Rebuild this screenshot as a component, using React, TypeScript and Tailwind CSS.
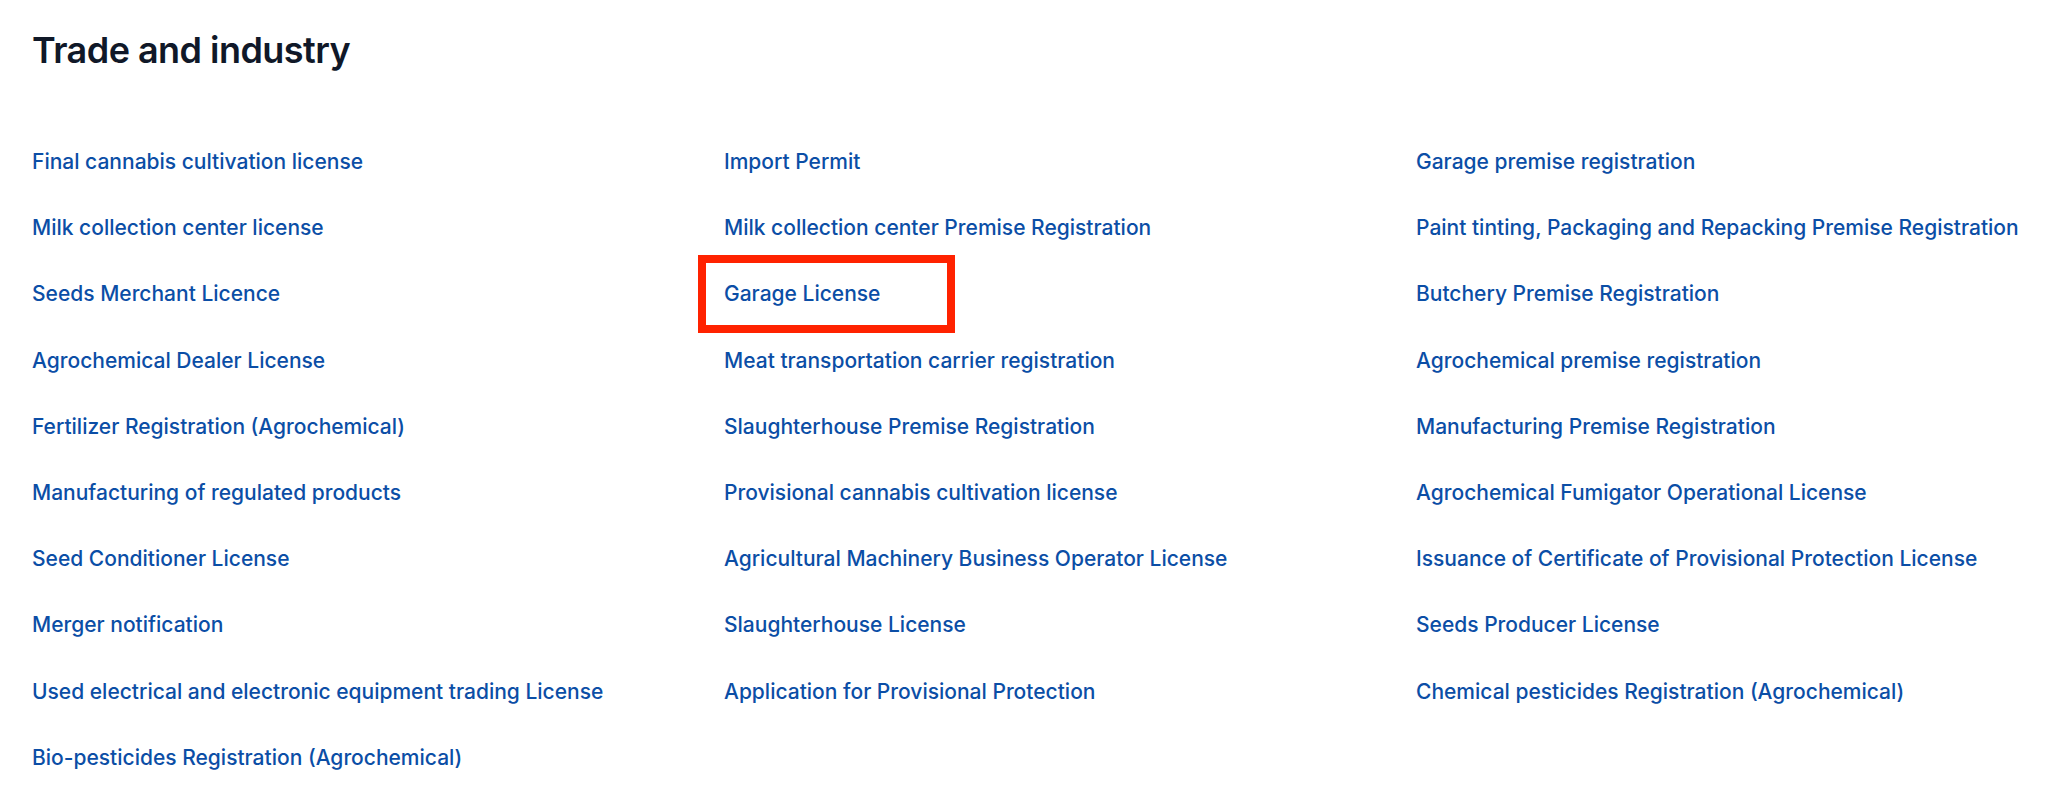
import React from "react";

const items: string[] = [
  "Final cannabis cultivation license",
  "Import Permit",
  "Garage premise registration",
  "Milk collection center license",
  "Milk collection center Premise Registration",
  "Paint tinting, Packaging and Repacking Premise Registration",
  "Seeds Merchant Licence",
  "Garage License",
  "Butchery Premise Registration",
  "Agrochemical Dealer License",
  "Meat transportation carrier registration",
  "Agrochemical premise registration",
  "Fertilizer Registration (Agrochemical)",
  "Slaughterhouse Premise Registration",
  "Manufacturing Premise Registration",
  "Manufacturing of regulated products",
  "Provisional cannabis cultivation license",
  "Agrochemical Fumigator Operational License",
  "Seed Conditioner License",
  "Agricultural Machinery Business Operator License",
  "Issuance of Certificate of Provisional Protection License",
  "Merger notification",
  "Slaughterhouse License",
  "Seeds Producer License",
  "Used electrical and electronic equipment trading License",
  "Application for Provisional Protection",
  "Chemical pesticides Registration (Agrochemical)",
  "Bio-pesticides Registration (Agrochemical)",
];

export default function App() {
  return (
    <div
      className="min-h-[793px] w-full bg-white pl-[32px] pt-[30px]"
      style={{ fontFamily: "Inter, 'Noto Sans', sans-serif" }}
    >
      <h1 className="text-[36px] font-semibold leading-[40px] tracking-[-0.015em] text-[#101828]">
        Trade and industry
      </h1>
      <div className="mt-[78px] grid grid-cols-[692px_692px_1fr] gap-y-[38.2px]">
        {items.map((t) => (
          <div key={t} className="relative">
            <a
              href="#"
              className="text-[21px] font-medium leading-[28px] text-[#0b4ea6] whitespace-nowrap"
            >
              {t}
            </a>
            {t === "Garage License" && (
              <div className="pointer-events-none absolute left-[-26px] top-[-25px] h-[78px] w-[257px] border-[8px] border-[#ff2200]" />
            )}
          </div>
        ))}
      </div>
    </div>
  );
}
